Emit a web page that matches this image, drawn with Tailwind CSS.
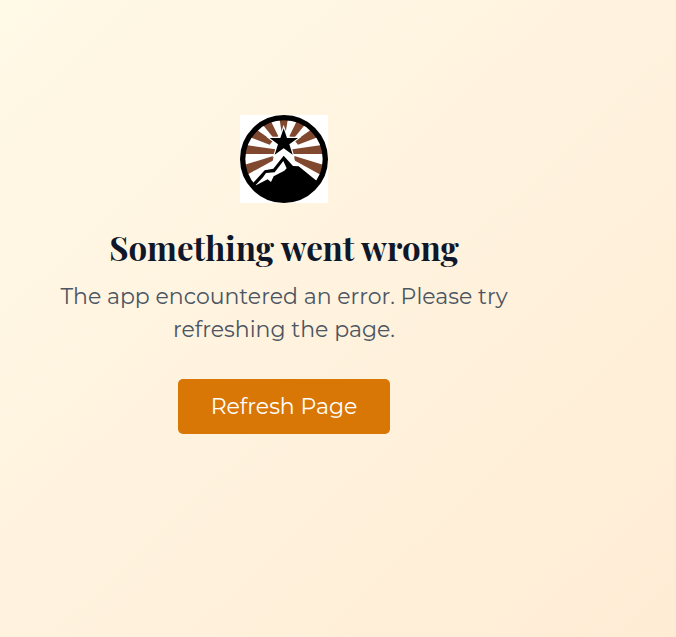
<!DOCTYPE html>
<html lang="en">
<head>
<meta charset="utf-8">
<meta name="viewport" content="width=device-width, initial-scale=1">
<title>Something went wrong</title>
<script src="https://cdn.jsdelivr.net/npm/@tailwindcss/browser@4"></script>
</head>
<body class="min-h-screen bg-linear-to-br from-[#fff9e7] to-[#ffecd5] font-['Montserrat','Inter',sans-serif]">
<main class="flex min-h-screen flex-col items-center pt-[115px] pr-[108px] text-center">
  <svg class="size-[88px]" viewBox="18 18 264 264" role="img" aria-label="Mountain and star logo">
    <rect x="18" y="18" width="264" height="264" fill="#fff"/>
    <circle cx="150" cy="150" r="124" fill="#fff"/>
    <g fill="#80492f">
      <path d="M136 28H162L155 70H143Z"/>
      <path d="M82 42L108 31L133 82L121 90Z"/>
      <path d="M46 84L66 61L116 96L107 107Z"/>
      <path d="M30 107L124 121V135H30Z"/>
      <path d="M30 168L120 140L116 155L38 198Z"/>
      <path d="M217 42L191 31L166 82L178 90Z"/>
      <path d="M253 84L233 61L183 96L192 107Z"/>
      <path d="M269 107L175 121V135H269Z"/>
      <path d="M269 168L179 140L183 155L261 198Z"/>
    </g>
    <path d="M149 58L159 87H192L166 106L176 137L149 118L122 137L132 106L107 87H139Z" fill="#000" stroke="#fff" stroke-width="7" paint-order="stroke"/>
    <path d="M48 232L92 184L118 179L149 140L177 171L194 172L252 219L224 256L150 276L76 256Z" fill="#000" stroke="#fff" stroke-width="10" paint-order="stroke"/>
    <path d="M148 156L158 178L151 185L119 202L111 219L101 211L63 230L87 205L96 192L122 190Z" fill="#fff"/>
    <circle cx="150" cy="150" r="124" fill="none" stroke="#000" stroke-width="16"/>
  </svg>
  <h1 class="mt-6 font-['Playfair_Display','Liberation_Serif',serif] text-[33px] leading-[41px] font-bold text-[#0f172a]">Something went wrong</h1>
  <p class="mt-3 max-w-[490px] text-[22px] leading-[33px] text-[#4b5563]">The app encountered an error. Please try refreshing the page.</p>
  <button type="button" class="mt-[33px] cursor-pointer rounded-[5px] bg-[#d97706] px-[33px] py-[11px] text-[22px] leading-[33px] text-white">Refresh Page</button>
</main>
</body>
</html>
